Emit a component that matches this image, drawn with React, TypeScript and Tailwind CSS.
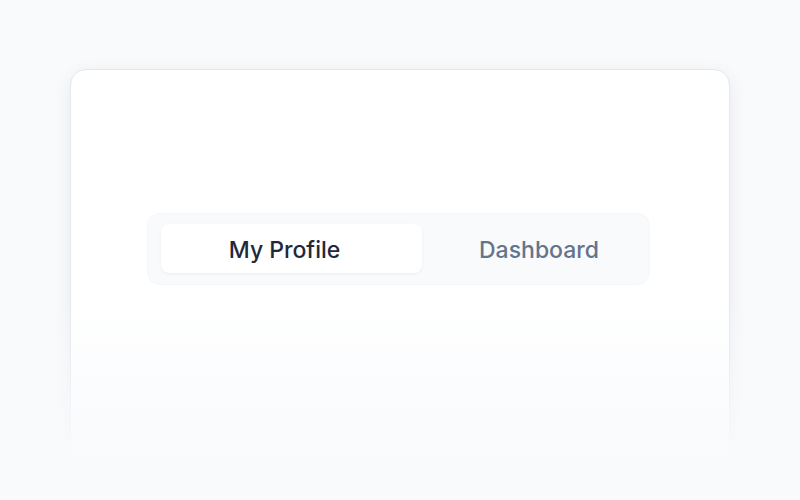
import React, { useState } from 'react';

const tabs = ['My Profile', 'Dashboard'] as const;

export default function App() {
  const [active, setActive] = useState<(typeof tabs)[number]>('My Profile');

  return (
    <div
      className="relative h-[500px] w-[800px] overflow-hidden bg-[#f8fafc]"
      style={{ fontFamily: 'Inter, "Noto Sans", sans-serif' }}
    >
      <div className="px-[70px] pt-[69px]">
        <div className="h-[480px] rounded-[16px] border border-[#e2e8f0] bg-white pl-[77px] pr-[80px] pt-[144px] shadow-[0_4px_18px_rgba(15,23,42,0.07)]">
          {/* tab switcher */}
          <div className="flex h-[70px] rounded-[12px] bg-[#f8fafc] px-[13px] pb-[11px] pt-[10px] shadow-[0_0_0_1px_rgba(241,245,249,0.8)]">
            <button
              onClick={() => setActive('My Profile')}
              className={`flex h-[49px] w-[261px] items-center justify-center rounded-[8px] pr-[14px] pt-[3px] text-[23px] font-[450] ${
                active === 'My Profile'
                  ? 'bg-white text-[#1e293b] shadow-[0_1px_3px_rgba(15,23,42,0.06)]'
                  : 'text-[#64748b]'
              }`}
            >
              My Profile
            </button>
            <button
              onClick={() => setActive('Dashboard')}
              className={`flex h-[49px] flex-1 items-center justify-center rounded-[8px] pl-[20px] pt-[3px] text-[23px] font-[450] ${
                active === 'Dashboard'
                  ? 'bg-white text-[#1e293b] shadow-[0_1px_3px_rgba(15,23,42,0.06)]'
                  : 'text-[#64748b]'
              }`}
            >
              Dashboard
            </button>
          </div>
        </div>
      </div>

      {/* bottom fade */}
      <div className="pointer-events-none absolute inset-x-0 bottom-0 h-[200px] bg-gradient-to-b from-[#f8fafc]/0 via-[#f8fafc]/60 to-[#f8fafc] to-80%" />
    </div>
  );
}
